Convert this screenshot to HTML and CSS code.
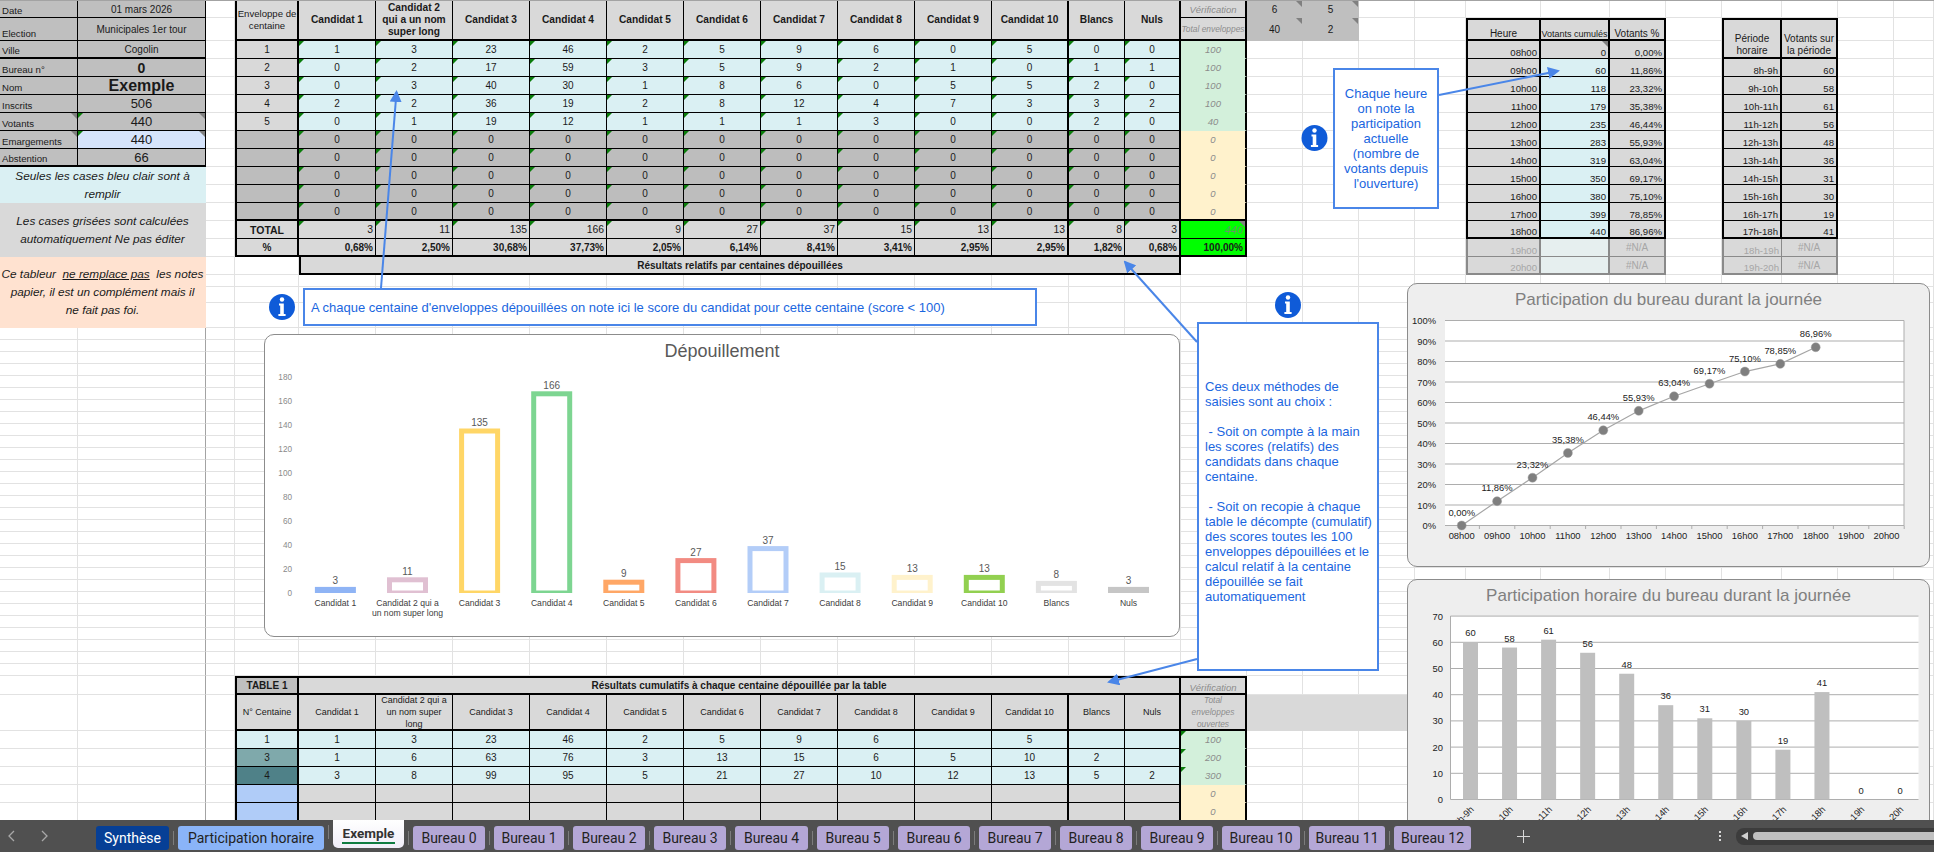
FILE: index.html
```html
<!DOCTYPE html>
<html lang="fr">
<head>
  <meta charset="UTF-8">
  <title>Exemple - Dépouillement</title>
  <link rel="stylesheet" href="styles.css">
</head>
<body>

  <div class="app">
    <div class="sheet" id="sheet">
      <div class="topline"></div>
      <div class="cells" id="cells"></div>

      <div class="chart chart-depouillement">
        <div class="chart-title">Dépouillement</div>
        <svg id="chartBars" viewBox="264 334 916 303"></svg>
      </div>
      <div class="chart chart-grey chart-participation">
        <div class="chart-title">Participation du bureau durant la journée</div>
        <svg id="chartLine" viewBox="1407 283 523 284"></svg>
      </div>
      <div class="chart chart-grey chart-horaire">
        <div class="chart-title">Participation horaire du bureau durant la journée</div>
        <svg id="chartHours" viewBox="1407 579 523 300"></svg>
      </div>

      <div class="callout callout-centaine">A chaque centaine d'enveloppes dépouillées on note ici le score du candidat pour cette centaine (score &lt; 100)</div>
      <div class="callout callout-heure">Chaque heure<br>on note la<br>participation<br>actuelle<br>(nombre de<br>votants depuis<br>l'ouverture)</div>
      <div class="callout callout-methodes">Ces deux méthodes de<br>saisies sont au choix :<br><br>&nbsp;- Soit on compte à la main<br>les scores (relatifs) des<br>candidats dans chaque<br>centaine.<br><br>&nbsp;- Soit on recopie à chaque<br>table le décompte (cumulatif)<br>des scores toutes les 100<br>enveloppes dépouillées et le<br>calcul relatif à la centaine<br>dépouillée se fait<br>automatiquement</div>

      <svg class="overlay" viewBox="0 0 1934 820">
        <defs>
          <marker id="head" markerWidth="6" markerHeight="6" refX="5" refY="3" orient="auto">
            <path d="M0 0 L6 3 L0 6 Z" fill="#4a86e8"></path>
          </marker>
          <g id="info">
            <circle r="13" fill="#0f5bd8"></circle>
            <circle cy="-7.5" r="2.2" fill="#fff"></circle>
            <path d="M-3 -3.5 H1.8 V7 H3.6 V9 H-3.6 V7 H-1.8 V-1.5 H-3 Z" fill="#fff"></path>
          </g>
        </defs>
        <line class="arrow" x1="381" y1="288" x2="396.5" y2="92"></line>
        <line class="arrow" x1="1439" y1="95" x2="1558" y2="71"></line>
        <line class="arrow" x1="1197" y1="342" x2="1125" y2="262"></line>
        <line class="arrow" x1="1197" y1="659" x2="1109" y2="682"></line>
        <use href="#info" x="282" y="307"></use>
        <use href="#info" x="1314.5" y="138"></use>
        <use href="#info" x="1288" y="305"></use>
      </svg>
    </div>

    <div class="tabbar">
      <svg class="nav" viewBox="0 0 54 32">
        <path d="M14 11 L9 16 L14 21"></path>
        <path d="M42 11 L47 16 L42 21"></path>
      </svg>
      <div class="tabs" id="tabs"></div>
      <svg class="plus" viewBox="0 0 13 13"><path d="M6.5 0 V13 M0 6.5 H13"></path></svg>
      <div class="dots"><i></i><i></i><i></i></div>
      <div class="scroll">
        <span class="scroll-left"></span>
        <span class="scroll-thumb"></span>
      </div>
    </div>
  </div>

  <script src="script.js"></script>

</body>
</html>
```

FILE: styles.css
```css
html,
body {
  margin: 0;
  padding: 0;
  height: 100%;
  overflow: hidden;
}

body {
  font-family: "Liberation Sans", Arial, sans-serif;
  font-size: 10px;
  color: #1a1a1a;
  background-color: #fff;
}

.app {
  display: flex;
  flex-direction: column;
  height: 852px;
}

.sheet {
  position: relative;
  flex: 1;
  min-height: 0;
  overflow: hidden;
}

.topline {
  height: 1px;
  background-color: #a3a3a3;
}

/* the spreadsheet itself: every track is one row or column of the sheet */
.cells {
  display: grid;
  grid-template-columns: 78px 128px 29px 64px repeat(10, 77px) 56px 56px 66px 56px 56px 56px 51px 75px 69px 56px 56px 60px 56px 56px 40px;
  grid-template-rows: 17px 23px repeat(13, 18px) 12px 16px 25px repeat(29, 12px) 19px 36px repeat(5, 18px);
}

.cell {
  position: relative;
  box-sizing: border-box;
  display: flex;
  align-items: center;
  justify-content: center;
  min-width: 0;
  min-height: 0;
  overflow: hidden;
  white-space: nowrap;
  text-align: center;
  border-right: 1px solid #e2e2e2;
  border-bottom: 1px solid #e2e2e2;
}

.ln { border-color: #000; }
.ln-grey { border-color: #8a8a8a; }
.edge { border-right-color: #a3a3a3; }
.noline { border-color: transparent; }
.tb { border-bottom: 2px solid #000; }
.tr { border-right: 2px solid #000; }
.tl { border-left: 2px solid #000; }
.tt { border-top: 2px solid #000; }
.tb-grey { border-bottom: 2px solid #8a8a8a; }
.tl-grey { border-left: 2px solid #8a8a8a; }
.tr-grey { border-right: 2px solid #8a8a8a; }
.noh { border-bottom-color: transparent; }

.c-lab { background-color: #bfbfbf; }
.c-calc { background-color: #bdbdbd; }
.c-head { background-color: #d9d9d9; }
.c-in { background-color: #daf0f3; }
.c-mail { background-color: #d6e4fb; }
.c-ok { background-color: #d3f0db; }
.c-wait { background-color: #fff2cc; }
.c-lime { background-color: #00ff00; }
.c-pale { background-color: #e6efef; }
.c-sky { background-color: #b0ccf8; }
.c-teal1 { background-color: #7fa9ab; }
.c-teal2 { background-color: #4f8188; }

.lab {
  align-items: flex-end;
  justify-content: flex-start;
  padding-left: 2px;
  font-size: 9.6px;
  line-height: 12px;
}

.big0 { font-size: 14px; font-weight: bold; }
.big1 { font-size: 16px; font-weight: bold; }
.num { font-size: 13px; }
.b { font-weight: bold; }
.r { justify-content: flex-end; padding-right: 2px; }
.bot { align-items: flex-end; }
.wrap { white-space: normal; line-height: 12px; }
.cand { font-size: 10.2px; font-weight: bold; }
.env { font-size: 9.6px; white-space: nowrap; }
.sub { font-size: 9px; }
.hour { font-size: 9.6px; }
.tot { font-size: 10.4px; }
.tot-head { font-size: 10.5px; }
.tight { font-size: 9px; }
.verif { font-style: italic; color: #8c8c8c; font-size: 9.5px; }
.verif-small { font-size: 8.4px; }
.verif-sum { font-size: 11px; color: #5fa05f; }
.na { color: #a6a6a6; }

.note {
  font-size: 11.8px;
  font-style: italic;
  line-height: 18px;
}

.note-blue { background-color: #daf0f3; }
.note-grey { background-color: #d9d9d9; }
.note-peach { background-color: #ffe2d0; }

/* small comment and error marks in the corners of a cell */
.mark::before {
  content: "";
  position: absolute;
  left: 0;
  top: 0;
  border-top: 5px solid #0a7d0a;
  border-right: 5px solid transparent;
}

.note-mark::after {
  content: "";
  position: absolute;
  right: 0;
  top: 0;
  border-top: 6px solid #808080;
  border-left: 6px solid transparent;
}

.chart {
  position: absolute;
  box-sizing: border-box;
  overflow: hidden;
  background-color: #fff;
  border: 1px solid #8c8c8c;
  border-radius: 10px;
}

.chart svg {
  position: absolute;
  left: -1px;
  top: -1px;
  display: block;
}

.chart-grey { background-color: #eee; }

.chart-title {
  position: relative;
  z-index: 1;
  text-align: center;
  font-size: 17px;
  color: #808080;
}

.chart-depouillement { left: 264px; top: 334px; width: 916px; height: 303px; }
.chart-depouillement svg { width: 916px; height: 303px; }
.chart-depouillement .chart-title { padding-top: 6px; font-size: 18px; color: #595959; }

.chart-participation { left: 1407px; top: 283px; width: 523px; height: 284px; }
.chart-participation svg { width: 523px; height: 284px; }
.chart-participation .chart-title { padding-top: 6px; }

.chart-horaire { left: 1407px; top: 579px; width: 523px; height: 300px; }
.chart-horaire svg { width: 523px; height: 300px; }
.chart-horaire .chart-title { padding-top: 6px; }

.axis { font-size: 9.4px; fill: #222; }
.axis-soft { font-size: 8.2px; fill: #8a8a8a; }
.cat { font-size: 8.6px; fill: #404040; }
.val { font-size: 10px; fill: #595959; }
.grid-line { stroke: #adadad; stroke-width: 1; }
.plot { fill: #fff; }
.series { fill: none; stroke: #a6a6a6; stroke-width: 1.2; }
.dot { fill: #7f7f7f; stroke: #a0a0a0; stroke-width: 0.5; }
.bar { fill: #bfbfbf; }

.callout {
  position: absolute;
  box-sizing: border-box;
  display: flex;
  align-items: center;
  background-color: #fff;
  border: 2px solid #4a86e8;
  font-size: 13px;
  line-height: 15px;
  color: #1a66e0;
}

.callout-centaine { left: 303px; top: 288px; width: 734px; height: 38px; padding-left: 6px; }
.callout-heure { left: 1333px; top: 68px; width: 106px; height: 141px; justify-content: center; text-align: center; }
.callout-methodes { left: 1197px; top: 322px; width: 182px; height: 349px; padding: 0 0 10px 6px; white-space: nowrap; }

.overlay {
  position: absolute;
  left: 0;
  top: 0;
  width: 1934px;
  height: 820px;
  pointer-events: none;
}

.arrow {
  stroke: #4a86e8;
  stroke-width: 2;
  marker-end: url(#head);
}

.tabbar {
  position: relative;
  display: flex;
  align-items: center;
  flex: none;
  height: 32px;
  background-color: #505050;
  font-family: Roboto, "Liberation Sans", sans-serif;
  font-size: 14px;
}

.nav {
  flex: none;
  width: 54px;
  height: 32px;
  margin-right: 42px;
  fill: none;
  stroke: #a8a8a8;
  stroke-width: 1.3;
}

.tabs {
  display: flex;
  align-items: center;
  align-self: stretch;
  flex: none;
}

.tab {
  box-sizing: border-box;
  display: flex;
  align-items: center;
  justify-content: center;
  height: 24px;
  margin-top: 4px;
  border-radius: 3px;
  color: #222;
  background-color: #b4a7d6;
}

.tab + .tab {
  position: relative;
  margin-left: 9px;
}

/* thin separator in the gap between two tabs */
.tab + .tab::before {
  content: "";
  position: absolute;
  left: -5px;
  top: 5px;
  width: 1px;
  height: 14px;
  background-color: #7c7c7c;
}

.tab-blue { background-color: #8ab4f8; }
.tab-navy { background-color: #063f96; color: #fff; }

.tab-current {
  flex-direction: column;
  height: 28px;
  margin-top: 0;
  align-self: flex-start;
  border-radius: 0 0 5px 5px;
  font-weight: bold;
  font-size: 13.5px;
  background: linear-gradient(#fff, #f1eef8);
  color: #333;
}

.tab-current span {
  padding: 0 1px 1px;
  border-bottom: 2px solid #107c41;
}

.plus {
  flex: none;
  width: 13px;
  height: 13px;
  margin-left: 46px;
  fill: none;
  stroke: #d8d8d8;
  stroke-width: 1;
}

.dots {
  display: flex;
  flex-direction: column;
  gap: 2px;
  margin-left: 189px;
}

.dots i {
  display: block;
  width: 2px;
  height: 2px;
  background-color: #d8d8d8;
}

.scroll {
  display: flex;
  align-items: center;
  gap: 5px;
  flex: 1;
  height: 17px;
  margin-left: 15px;
  padding-left: 5px;
  border-radius: 8px 0 0 8px;
  background-color: #3c3c3c;
}

.scroll-left {
  border-top: 4px solid transparent;
  border-bottom: 4px solid transparent;
  border-right: 7px solid #d0d0d0;
}

.scroll-thumb {
  flex: 1;
  height: 8px;
  border-radius: 4px 0 0 4px;
  background-color: #c0c0c0;
}
```

FILE: script.js
```js
var ROWS = 54;
var COLS = 29;
var cells = {};
var covered = {};

function put(r, c, text, cls, rs, cs) {
  cells[r + "," + c] = { text: text, cls: cls, rs: rs || 1, cs: cs || 1 };
  for (var i = 0; i < (rs || 1); i++) {
    for (var j = 0; j < (cs || 1); j++) {
      if (i || j) covered[(r + i) + "," + (c + j)] = true;
    }
  }
}

/* left panel */
var panel = [
  ["Date", "01 mars 2026", ""],
  ["Election", "Municipales 1er tour", ""],
  ["Ville", "Cogolin", "tb"],
  ["Bureau n°", "0", "big0"],
  ["Nom", "Exemple", "big1"],
  ["Inscrits", "506", "num"],
  ["Votants", "440", "num note-mark mark"],
  ["Emargements", "440", "num note-mark mark c-mail"],
  ["Abstention", "66", "num tb"]
];
panel.forEach(function (p, i) {
  var thick = p[2].indexOf("tb") >= 0 ? " tb" : "";
  var noted = p[2].indexOf("note-mark") >= 0 ? " note-mark" : "";
  put(i, 0, p[0], "lab c-lab ln" + thick + noted);
  put(i, 1, p[1], "c-lab ln " + p[2]);
});
put(9, 0, "Seules les cases bleu clair sont à<br>remplir", "note note-blue noline edge", 2, 2);
put(11, 0, "Les cases grisées sont calculées<br>automatiquement Ne pas éditer", "note note-grey noline edge", 3, 2);
put(14, 0, "Ce tableur &nbsp;<u>ne remplace pas</u>&nbsp; les notes<br>papier, il est un complément mais il<br>ne fait pas foi.", "note note-peach noline edge", 4, 2);

for (var r = 18; r < ROWS; r++) {
  put(r, 1, "", "edge");
}

/* results per hundred */
var names = ["Candidat 1", "Candidat 2<br>qui a un nom<br>super long", "Candidat 3", "Candidat 4", "Candidat 5", "Candidat 6", "Candidat 7", "Candidat 8", "Candidat 9", "Candidat 10", "Blancs", "Nuls"];
var chartNames = ["Candidat 1", "", "Candidat 3", "Candidat 4", "Candidat 5", "Candidat 6", "Candidat 7", "Candidat 8", "Candidat 9", "Candidat 10", "Blancs", "Nuls"];
var scores = [
  [1, 3, 23, 46, 2, 5, 9, 6, 0, 5, 0, 0, 100],
  [0, 2, 17, 59, 3, 5, 9, 2, 1, 0, 1, 1, 100],
  [0, 3, 40, 30, 1, 8, 6, 0, 5, 5, 2, 0, 100],
  [2, 2, 36, 19, 2, 8, 12, 4, 7, 3, 3, 2, 100],
  [0, 1, 19, 12, 1, 1, 1, 3, 0, 0, 2, 0, 40]
];
var totals = [3, 11, 135, 166, 9, 27, 37, 15, 13, 13, 8, 3];
var percents = ["0,68%", "2,50%", "30,68%", "37,73%", "2,05%", "6,14%", "8,41%", "3,41%", "2,95%", "2,95%", "1,82%", "0,68%"];

function sep(k) {
  return k === 9 || k === 11 ? " tr" : "";
}

put(0, 3, "Enveloppe de<br>centaine", "wrap env c-head ln tb tl tr", 2, 1);
names.forEach(function (name, k) {
  put(0, 4 + k, name, "wrap cand c-head ln tb" + sep(k), 2, 1);
});
put(0, 16, "Vérification", "verif c-head ln tr");
put(1, 16, "Total enveloppes", "verif verif-small c-head ln tb tr");

for (var i = 0; i < 10; i++) {
  var row = 2 + i;
  var filled = i < 5;
  var last = i === 9 ? " tb" : " ";
  put(row, 3, filled ? String(i + 1) : "", (filled ? "c-head" : "c-calc") + " ln tl tr" + last);
  for (var k = 0; k < 12; k++) {
    put(row, 4 + k, filled ? String(scores[i][k]) : "0", (filled ? "c-in" : "c-calc") + " mark ln" + last + sep(k));
  }
  put(row, 16, filled ? String(scores[i][12]) : "0", "verif tr " + (filled ? "c-ok" : "c-wait") + (i === 9 ? " tb" : " noh"));
}

put(12, 3, "TOTAL", "b tot-head c-head ln tl tr");
put(13, 3, "%", "b c-head ln tl tr tb");
for (var t = 0; t < 12; t++) {
  put(12, 4 + t, String(totals[t]), "r tot c-head mark ln" + sep(t));
  put(13, 4 + t, percents[t], "r b c-head ln tb" + sep(t));
}
put(12, 16, "440", "r verif verif-sum c-lime note-mark ln tr");
put(13, 16, "100,00%", "r b c-lime ln tr tb");
put(14, 4, "Résultats relatifs par centaines dépouillées", "b c-head ln tb tl tr", 1, 12);

/* stray helper cells */
put(0, 17, "6", "c-lab noline note-mark");
put(0, 18, "5", "c-lab noline note-mark");
put(1, 17, "40", "c-lab noline note-mark");
put(1, 18, "2", "c-lab noline note-mark");

/* hourly turnout */
var hours = ["08h00", "09h00", "10h00", "11h00", "12h00", "13h00", "14h00", "15h00", "16h00", "17h00", "18h00", "19h00", "20h00"];
var voters = [0, 60, 118, 179, 235, 283, 319, 350, 380, 399, 440];
var rates = ["0,00%", "11,86%", "23,32%", "35,38%", "46,44%", "55,93%", "63,04%", "69,17%", "75,10%", "78,85%", "86,96%"];
var periods = ["8h-9h", "9h-10h", "10h-11h", "11h-12h", "12h-13h", "13h-14h", "14h-15h", "15h-16h", "16h-17h", "17h-18h", "18h-19h", "19h-20h"];
var perPeriod = [60, 58, 61, 56, 48, 36, 31, 30, 19, 41];

put(1, 21, "Heure", "bot c-head ln tt tl tr tb");
put(1, 22, "Votants cumulés", "bot tight c-head ln tt tb tr");
put(1, 23, "Votants %", "bot c-head ln tt tb tr");
hours.forEach(function (h, i) {
  var row = 2 + i;
  if (i > 10) {
    var end = i === 12 ? " tb-grey" : "";
    put(row, 21, h, "r bot hour na c-head ln-grey tl-grey tr-grey" + end);
    put(row, 22, "", "c-pale ln-grey tr-grey" + end);
    put(row, 23, "#N/A", "na c-head ln-grey tr-grey" + end);
    return;
  }
  var end2 = i === 10 ? " tb" : "";
  put(row, 21, h, "r bot hour c-head ln tl tr" + end2);
  put(row, 22, String(voters[i]), "r bot hour ln tr " + (i ? "c-in" : "c-head note-mark") + end2);
  put(row, 23, rates[i], "r bot hour c-head ln tr" + end2);
});

put(1, 25, "Période<br>horaire", "wrap bot c-head ln tt tl tr tb", 2, 1);
put(1, 26, "Votants sur<br>la période", "wrap bot c-head ln tt tr tb", 2, 1);
periods.forEach(function (p, i) {
  var row = 3 + i;
  if (i > 9) {
    var end = i === 11 ? " tb-grey" : "";
    put(row, 25, p, "r bot hour na c-head ln-grey tl-grey" + end);
    put(row, 26, "#N/A", "na c-head ln-grey tr-grey" + end);
    return;
  }
  var end2 = i === 9 ? " tb" : "";
  put(row, 25, p, "r bot hour c-head ln tl tr" + end2);
  put(row, 26, String(perPeriod[i]), "r bot hour c-head ln tr" + end2);
});

/* table 1, cumulated results */
var T = 47;
var cumul = [
  ["1", "1", "3", "23", "46", "2", "5", "9", "6", "", "5", "", "", "100"],
  ["3", "1", "6", "63", "76", "3", "13", "15", "6", "5", "10", "2", "", "200"],
  ["4", "3", "8", "99", "95", "5", "21", "27", "10", "12", "13", "5", "2", "300"]
];
var tableHeads = names.slice();
tableHeads[1] = "Candidat 2 qui a<br>un nom super<br>long";
put(T, 3, "TABLE 1", "b c-lab ln tt tl tr tb");
put(T, 4, "Résultats cumulatifs à chaque centaine dépouillée par la table", "b c-head ln tt tb tr", 1, 12);
put(T, 16, "Vérification", "verif c-head ln tt tr tb bot");
put(T + 1, 3, "N° Centaine", "sub c-head ln tl tr tb");
tableHeads.forEach(function (name, k) {
  put(T + 1, 4 + k, name, "wrap sub c-head ln tb" + sep(k));
});
put(T + 1, 16, "Total<br>enveloppes<br>ouvertes", "wrap verif verif-small c-head ln tr tb");
put(T + 1, 17, "", "c-head noline");
put(T + 1, 18, "", "c-head noline");
put(T + 1, 19, "", "c-head noline");

for (var n = 0; n < 5; n++) {
  var rowT = T + 2 + n;
  var line = cumul[n];
  var firstCls = n === 0 ? "c-in" : n === 1 ? "c-teal1" : n === 2 ? "c-teal2" : "c-sky";
  put(rowT, 3, line ? line[0] : "", firstCls + " ln tl tr");
  for (var m = 0; m < 12; m++) {
    put(rowT, 4 + m, line ? line[m + 1] : "", (line ? "c-in" : "c-head") + " ln" + sep(m));
  }
  put(rowT, 16, line ? line[13] : "0", "verif tr noh " + (line ? "c-ok mark" : "c-wait"));
}

/* write the grid */
var host = document.getElementById("cells");
for (var y = 0; y < ROWS; y++) {
  for (var x = 0; x < COLS; x++) {
    var key = y + "," + x;
    if (covered[key]) continue;
    var data = cells[key] || { text: "", cls: "", rs: 1, cs: 1 };
    var el = document.createElement("div");
    el.className = "cell " + data.cls;
    el.style.gridArea = (y + 1) + "/" + (x + 1) + "/span " + data.rs + "/span " + data.cs;
    if (data.text) {
      var inner = document.createElement("span");
      inner.innerHTML = data.text;
      el.appendChild(inner);
    }
    host.appendChild(el);
  }
}

/* charts */
function svgText(x, y, text, cls, anchor, extra) {
  return '<text x="' + x + '" y="' + y + '" class="' + cls + '" text-anchor="' + (anchor || "middle") + '"' + (extra || "") + ">" + text + "</text>";
}

var barColors = ["#8fb4f5", "#e0c0d2", "#ffd666", "#7dd591", "#ffa766", "#f28b82", "#b3cdf8", "#daf0f3", "#fff2cc", "#92d050", "#e3e3e3", "#c6c6c6"];
var out = '<defs><clipPath id="above"><rect x="264" y="334" width="916" height="259"></rect></clipPath></defs>';
for (var v = 0; v <= 180; v += 20) {
  out += svgText(292, 593 - v * 1.2 + 3, v, "axis-soft", "end");
}
totals.forEach(function (value, k) {
  var cx = 335.4 + k * 72.1;
  var top = 593 - value * 1.2;
  out += '<rect x="' + (cx - 18) + '" y="' + top + '" width="36" height="' + (value * 1.2) + '" fill="none" stroke="' + barColors[k] + '" stroke-width="5" clip-path="url(#above)"></rect>';
  out += svgText(cx, top - 5, value, "val");
  if (k === 1) {
    out += svgText(cx, 606, "Candidat 2 qui a", "cat") + svgText(cx, 616, "un nom super long", "cat");
  } else {
    out += svgText(cx, 606, chartNames[k], "cat");
  }
});
document.getElementById("chartBars").innerHTML = out;

var lineSvg = '<rect class="plot" x="1445" y="320.5" width="459" height="205"></rect>';
for (var p = 0; p <= 10; p++) {
  var gy = 525.5 - p * 20.5;
  lineSvg += svgText(1436, gy + 3.5, (p * 10) + "%", "axis", "end");
  lineSvg += '<line class="grid-line" x1="1445" x2="1904" y1="' + gy + '" y2="' + gy + '"></line>';
}
lineSvg += '<line class="grid-line" x1="1904" x2="1904" y1="320.5" y2="525.5"></line>';
var pts = [];
var rateValues = [0, 11.86, 23.32, 35.38, 46.44, 55.93, 63.04, 69.17, 75.1, 78.85, 86.96];
rateValues.forEach(function (value, i) {
  pts.push((1461.7 + i * 35.4) + "," + (525.5 - value * 2.05));
});
lineSvg += '<polyline class="series" points="' + pts.join(" ") + '"></polyline>';
hours.forEach(function (h, i) {
  var cx = 1461.7 + i * 35.4;
  lineSvg += '<line class="grid-line" x1="' + (cx + 17.7) + '" x2="' + (cx + 17.7) + '" y1="525.5" y2="529"></line>';
  lineSvg += svgText(cx, 539, h, "axis");
  if (i < rateValues.length) {
    var py = 525.5 - rateValues[i] * 2.05;
    lineSvg += '<circle class="dot" cx="' + cx + '" cy="' + py + '" r="4.5"></circle>';
    lineSvg += svgText(cx, py - 10, rates[i], "axis");
  }
});
document.getElementById("chartLine").innerHTML = lineSvg;

var hoursSvg = '<rect class="plot" x="1450.5" y="616" width="468" height="183.5"></rect>';
for (var g = 0; g <= 7; g++) {
  var hy = 799.5 - g * 26.2;
  hoursSvg += svgText(1443, hy + 3.5, g * 10, "axis", "end");
  hoursSvg += '<line class="grid-line" x1="1450.5" x2="1918.5" y1="' + hy + '" y2="' + hy + '"></line>';
}
hoursSvg += '<line class="grid-line" x1="1450.5" x2="1450.5" y1="616" y2="799.5"></line>';
var hourValues = perPeriod.concat([0, 0]);
hourValues.forEach(function (value, i) {
  var cx = 1470.5 + i * 39.05;
  var h = value * 2.62;
  hoursSvg += '<rect class="bar" x="' + (cx - 7.5) + '" y="' + (799.5 - h) + '" width="15" height="' + h + '"></rect>';
  hoursSvg += svgText(cx, 799.5 - h - 6, value, "axis");
  hoursSvg += svgText(cx + 4, 810, periods[i], "axis", "end", ' transform="rotate(-45 ' + (cx + 4) + ' 810)"');
});
document.getElementById("chartHours").innerHTML = hoursSvg;

/* sheet tabs */
var tabList = [
  ["Synthèse", 73, "tab-navy"],
  ["Participation horaire", 146, "tab-blue"],
  ["Exemple", 71, "tab-current"]
];
var bureauWidths = [72, 70, 72, 72, 73, 72, 72, 72, 72, 72, 78, 76, 77];
bureauWidths.forEach(function (w, i) {
  tabList.push(["Bureau " + i, w, ""]);
});
var tabs = document.getElementById("tabs");
tabList.forEach(function (t) {
  var el = document.createElement("div");
  el.className = "tab " + t[2];
  el.style.width = t[1] + "px";
  el.innerHTML = "<span>" + t[0] + "</span>";
  tabs.appendChild(el);
});
```
